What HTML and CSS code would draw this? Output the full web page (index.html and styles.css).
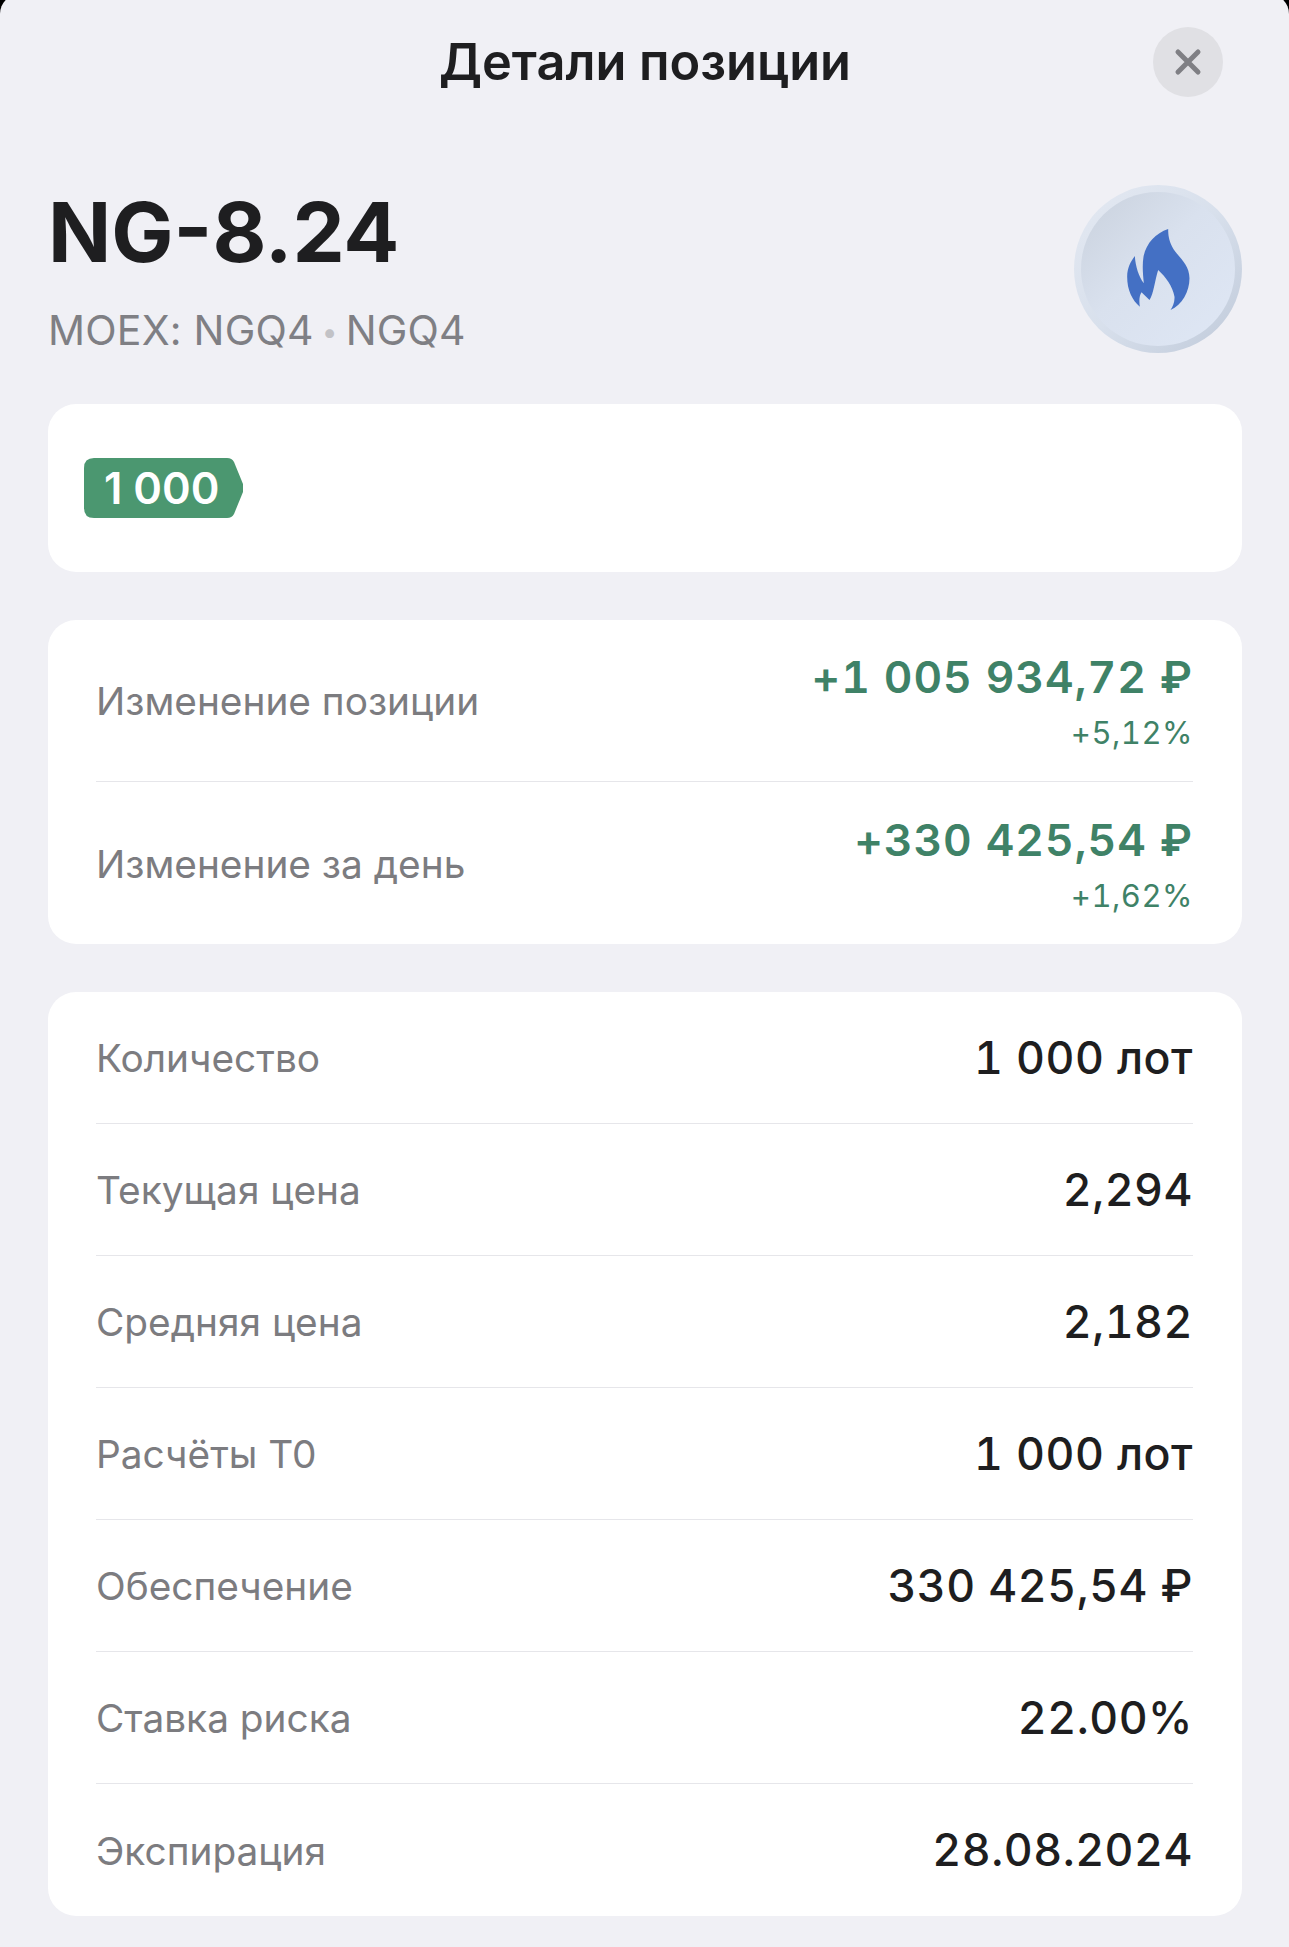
FILE: index.html
```html
<!DOCTYPE html>
<html lang="ru">
<head>
<meta charset="utf-8">
<title>Детали позиции</title>
<link rel="stylesheet" href="styles.css">
</head>
<body>
<main class="sheet">
  <header class="topbar">
    <h1 class="topbar-title">Детали позиции</h1>
    <button class="close" aria-label="Закрыть">
      <svg width="28" height="28" viewBox="0 0 28 28"><path d="M4 4 L24 24 M24 4 L4 24" stroke="#7f7f84" stroke-width="5" stroke-linecap="round" fill="none"/></svg>
    </button>
  </header>
  <section class="hero">
    <div class="hero-text">
      <div class="ticker">NG-8.24</div>
      <div class="sub">MOEX: NGQ4<span class="dot">•</span>NGQ4</div>
    </div>
    <div class="logo">
      <div class="logo-inner">
        <svg width="63" height="81" viewBox="35 22 188 243"><path fill="#4470c4" d="M158 22 C120 35 92 65 84 105 C80 130 82 155 85 185 C70 165 60 135 58 103 C45 120 35 140 35 165 C35 205 50 235 73 255 C70 235 72 222 78 212 L102 235 C115 215 118 175 128 145 C150 165 172 195 177 225 C178 240 172 255 165 265 C200 250 222 210 222 170 C222 125 185 105 170 75 C160 55 158 40 158 22 Z"/></svg>
      </div>
    </div>
  </section>
  <section class="card card-tag">
    <div class="tag">1 000</div>
  </section>
  <section class="card">
    <div class="row row-change">
      <span class="label">Изменение позиции</span>
      <div class="change">
        <div class="change-main">+1 005 934,72 ₽</div>
        <div class="change-pct">+5,12%</div>
      </div>
    </div>
    <div class="row row-change">
      <span class="label">Изменение за день</span>
      <div class="change">
        <div class="change-main">+330 425,54 ₽</div>
        <div class="change-pct">+1,62%</div>
      </div>
    </div>
  </section>
  <section class="card">
    <div class="row row-info"><span class="label">Количество</span><span class="value">1 000 лот</span></div>
    <div class="row row-info"><span class="label">Текущая цена</span><span class="value">2,294</span></div>
    <div class="row row-info"><span class="label">Средняя цена</span><span class="value">2,182</span></div>
    <div class="row row-info"><span class="label">Расчёты Т0</span><span class="value">1 000 лот</span></div>
    <div class="row row-info"><span class="label">Обеспечение</span><span class="value">330 425,54 ₽</span></div>
    <div class="row row-info"><span class="label">Ставка риска</span><span class="value">22.00<span class="percent">%</span></span></div>
    <div class="row row-info"><span class="label">Экспирация</span><span class="value">28.08.2024</span></div>
  </section>
</main>
</body>
</html>
```
FILE: styles.css
```css
* { box-sizing: border-box; }
html, body { margin: 0; padding: 0; height: 1947px; overflow: hidden; background: #000; }
body { font-family: Inter, "Noto Sans", sans-serif; }
.sheet {
  height: 1953px;
  margin-top: -6px;
  padding: 6px 47px 0 48px;
  background: #f0f0f5;
  border-radius: 20px 20px 0 0;
}
.topbar {
  height: 124px;
  position: relative;
  display: flex;
  align-items: center;
  justify-content: center;
}
.topbar-title {
  margin: 0 0 2px;
  font-size: 50.5px;
  font-weight: 600;
  color: #1e1e20;
}
.close {
  position: absolute;
  right: 19px;
  top: 27px;
  width: 70px;
  height: 70px;
  padding: 0;
  border: 0;
  border-radius: 50%;
  background: #e0e0e4;
  display: flex;
  align-items: center;
  justify-content: center;
}
.hero {
  height: 280px;
  padding-top: 58px;
  display: flex;
  justify-content: space-between;
  align-items: flex-start;
}
.ticker {
  font-size: 83px;
  font-weight: 700;
  line-height: 100px;
  color: #1e1e20;
}
.sub {
  margin-top: 24px;
  font-size: 41px;
  line-height: 48px;
  letter-spacing: 0.2px;
  color: #7f7f84;
}
.dot { color: #c2c2c6; margin: 0 8px; font-size: 28px; vertical-align: 3px; }
.logo {
  width: 168px;
  height: 168px;
  border-radius: 50%;
  margin-top: 3px;
  padding: 7px;
  background: linear-gradient(135deg, #e4e9f2 0%, #d8e0ec 50%, #bfc9d9 100%);
}
.logo-inner {
  width: 100%;
  height: 100%;
  border-radius: 50%;
  background: linear-gradient(135deg, #c9d1dd 0%, #d9e1ee 45%, #dfe7f5 100%);
  display: flex;
  align-items: center;
  justify-content: center;
}
.card {
  background: #fff;
  border-radius: 28px;
  padding: 0 49px 0 48px;
  margin-bottom: 48px;
}
.card-tag {
  height: 168px;
  padding: 0 36px;
  display: flex;
  align-items: center;
}
.tag {
  width: 159px;
  height: 60px;
  padding-left: 20px;
  display: flex;
  align-items: center;
  background: #4b9770;
  color: #fff;
  font-size: 43.5px;
  font-weight: 600;
  clip-path: path("M10 0 H143 Q148 0 150 4 L159 26 Q160 30 159 34 L150 56 Q148 60 143 60 H10 Q0 60 0 50 V10 Q0 0 10 0 Z");
}
.row {
  display: flex;
  justify-content: space-between;
  align-items: center;
  border-bottom: 1px solid #e6e6ea;
}
.row:last-child { border-bottom: 0; }
.row-change { height: 162px; }
.row-info { height: 132px; }
.label {
  font-size: 38.8px;
  color: #7c7c80;
}
.value {
  font-size: 44.7px;
  font-weight: 450;
  color: #1e1e20;
  letter-spacing: 0.5px;
  font-variant-numeric: tabular-nums;
}
.percent { font-variant-numeric: normal; }
.change { text-align: right; }
.change-main {
  font-size: 44.3px;
  line-height: 54px;
  font-weight: 600;
  color: #3f8267;
  letter-spacing: 1px;
  font-variant-numeric: tabular-nums;
}
.change-pct {
  margin-top: 11px;
  font-size: 31px;
  line-height: 36px;
  color: #3f8267;
  letter-spacing: 0.5px;
  font-variant-numeric: tabular-nums;
}
```
